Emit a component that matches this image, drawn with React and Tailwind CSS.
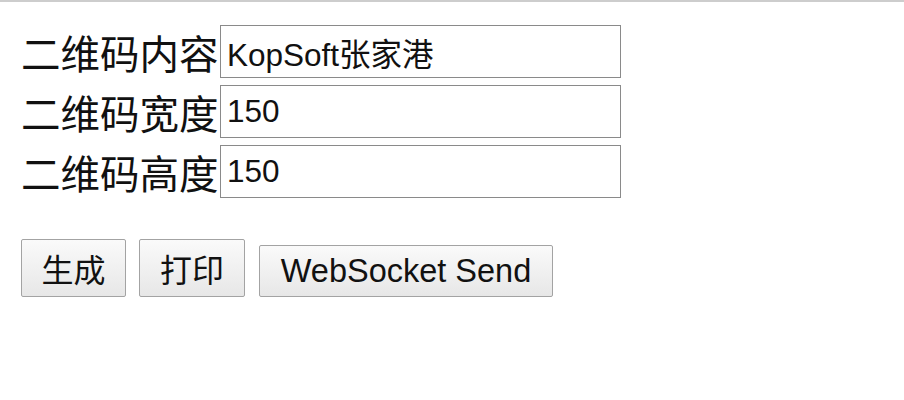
import React from 'react';

const FIELDS = [
  { label: '二维码内容', value: 'KopSoft张家港' },
  { label: '二维码宽度', value: '150' },
  { label: '二维码高度', value: '150' },
];

const CJK = "font-['Noto_Sans_CJK_SC','Liberation_Sans',sans-serif]";
const LATIN = "font-['Liberation_Sans','Noto_Sans_CJK_SC',sans-serif]";

const btnBase =
  'border border-[#a3a3a3] rounded-[2px] bg-gradient-to-b from-[#fafafa] to-[#e7e7e7] text-[#111] px-[19px] flex items-center justify-center';

export default function App() {
  return (
    <div className="w-[904px] h-[400px] bg-white border-t-2 border-[#cdcdcd] overflow-hidden">
      <div className="pl-[21px] pt-[23px] flex flex-col gap-[7px]">
        {FIELDS.map(f => (
          <div key={f.label} className="flex items-center">
            <span className={`${CJK} text-[39.5px] leading-[53px] text-[#111] w-[199px] whitespace-nowrap`}>
              {f.label}
            </span>
            <input
              readOnly
              value={f.value}
              className={`${LATIN} w-[401px] h-[53px] border border-[#8a8a8a] bg-white pl-[6px] text-[31.5px] text-[#111] outline-none`}
            />
          </div>
        ))}
      </div>

      <div className="pl-[21px] mt-[41px] flex items-end gap-[13px]">
        <button className={`${btnBase} ${CJK} h-[58px] w-[105px] text-[32px]`}>生成</button>
        <button className={`${btnBase} ${CJK} h-[58px] w-[106px] text-[32px]`}>打印</button>
        <button className={`${btnBase} ${LATIN} h-[52px] w-[294px] text-[32.5px] ml-[1px]`}>WebSocket Send</button>
      </div>
    </div>
  );
}
